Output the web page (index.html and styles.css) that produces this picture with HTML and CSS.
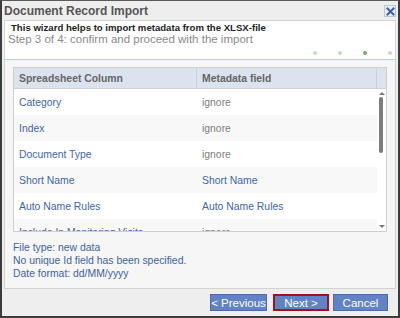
FILE: index.html
```html
<!DOCTYPE html>
<html lang="en">
<head>
    <meta charset="UTF-8">
    <title>Document Record Import</title>
    <link rel="stylesheet" href="styles.css">
</head>
<body>
    <div class="dialog">
        <!-- Title bar -->
        <div class="titlebar">
            <span class="title">Document Record Import</span>
            <button class="close" type="button" aria-label="Close">
                <svg width="9" height="9" viewBox="0 0 9 9">
                    <path d="M1.5 1.5 L7.5 7.5 M7.5 1.5 L1.5 7.5" stroke="#3b5ea6" stroke-width="2" stroke-linecap="square"/>
                </svg>
            </button>
        </div>

        <!-- Wizard header -->
        <div class="wizard-head">
            <div class="intro">This wizard helps to import metadata from the XLSX-file</div>
            <div class="step">Step 3 of 4: confirm and proceed with the import</div>
            <div class="dots">
                <span class="dot"></span>
                <span class="dot"></span>
                <span class="dot active"></span>
                <span class="dot"></span>
            </div>
        </div>

        <!-- Wizard body -->
        <div class="wizard-body">
            <div class="grid">
                <div class="grid-header">
                    <div class="col col-1">Spreadsheet Column</div>
                    <div class="col col-2">Metadata field</div>
                    <div class="col col-pad"></div>
                </div>
                <div class="grid-main">
                    <div class="rows">
                        <div class="row">
                            <div class="col col-1 link">Category</div>
                            <div class="col col-2 muted">ignore</div>
                        </div>
                        <div class="row alt">
                            <div class="col col-1 link">Index</div>
                            <div class="col col-2 muted">ignore</div>
                        </div>
                        <div class="row">
                            <div class="col col-1 link">Document Type</div>
                            <div class="col col-2 muted">ignore</div>
                        </div>
                        <div class="row alt">
                            <div class="col col-1 link">Short Name</div>
                            <div class="col col-2 link">Short Name</div>
                        </div>
                        <div class="row">
                            <div class="col col-1 link">Auto Name Rules</div>
                            <div class="col col-2 link">Auto Name Rules</div>
                        </div>
                        <div class="row alt">
                            <div class="col col-1 link">Include In Monitoring Visits</div>
                            <div class="col col-2 muted">ignore</div>
                        </div>
                    </div>
                    <div class="scrollbar">
                        <span class="arrow up"></span>
                        <div class="track"><span class="thumb"></span></div>
                        <span class="arrow down"></span>
                    </div>
                </div>
            </div>

            <div class="info">
                <div>File type: new data</div>
                <div>No unique Id field has been specified.</div>
                <div>Date format: dd/MM/yyyy</div>
            </div>
        </div>

        <!-- Buttons -->
        <div class="buttons">
            <button type="button" class="btn btn-prev">&lt; Previous</button>
            <button type="button" class="btn btn-focus">Next &gt;</button>
            <button type="button" class="btn btn-cancel">Cancel</button>
        </div>
    </div>
</body>
</html>
```

FILE: styles.css
```css
body {
    margin: 0;
    padding: 0;
    font-family: "Liberation Sans", Arial, sans-serif;
    background-color: #ffffff;
}

.dialog {
    width: 400px;
    height: 318px;
    box-sizing: border-box;
    border: 2px solid #3c3c3c;
    border-top: 1px solid #5a5a5a;
    background-color: #eeeeee;
    display: flex;
    flex-direction: column;
    overflow: hidden;
}

/* Title bar */
.titlebar {
    height: 19px;
    flex-shrink: 0;
    display: flex;
    align-items: center;
    justify-content: space-between;
    padding: 0 2px 0 2px;
}

.title {
    font-size: 12px;
    font-weight: bold;
    color: #555555;
}

.close {
    width: 12px;
    height: 12px;
    padding: 0;
    border: 1px solid #b9c6de;
    background-color: #e9eef7;
    display: flex;
    align-items: center;
    justify-content: center;
    margin-top: 1px;
}

/* Wizard header */
.wizard-head {
    margin: 0 2px;
    height: 40px;
    flex-shrink: 0;
    box-sizing: border-box;
    background-color: #ffffff;
    border: 1px solid #d6d6d6;
    border-bottom: 1px solid #bcd0ea;
    padding: 1px 0 0 3px;
}

.intro {
    font-size: 9.6px;
    line-height: 11px;
    font-weight: bold;
    color: #222222;
    padding-left: 3px;
}

.step {
    font-size: 11.5px;
    line-height: 13px;
    color: #8a8a8a;
}

.dots {
    display: flex;
    justify-content: flex-end;
    gap: 21px;
    padding-right: 3px;
    margin-top: 5px;
}

.dot {
    width: 4px;
    height: 4px;
    border-radius: 50%;
    background-color: #bfe0b8;
}

.dot.active {
    background-color: #6cb264;
}

/* Wizard body */
.wizard-body {
    margin: 0 2px;
    height: 229px;
    flex-shrink: 0;
    box-sizing: border-box;
    background-color: #f6f6f6;
    border: 1px solid #d2d2d2;
    border-top: none;
    padding: 7px 8px 0 8px;
    font-size: 10.4px;
}

.grid {
    border: 1px solid #cfcfcf;
    background-color: #ffffff;
}

.grid-header {
    display: flex;
    height: 20px;
    background-color: #dbe3ee;
    border-bottom: 1px solid #c9d0da;
    font-weight: bold;
    color: #666666;
}

.col {
    display: flex;
    align-items: center;
    padding-left: 5px;
    box-sizing: border-box;
    white-space: nowrap;
    overflow: hidden;
}

.col-1 {
    width: 183px;
}

.col-2 {
    width: 180px;
}

.grid-header .col-1,
.grid-header .col-2 {
    border-right: 1px solid #c9d0da;
}

.col-pad {
    flex: 1;
}

.grid-main {
    display: flex;
    height: 142px;
    overflow: hidden;
}

.rows {
    width: 363px;
}

.row {
    display: flex;
    height: 26px;
    background-color: #ffffff;
}

.row.alt {
    background-color: #f8f8f8;
}

.link {
    color: #3e65a8;
}

.muted {
    color: #7e7e7e;
}

/* Fake scrollbar */
.scrollbar {
    flex: 1;
    display: flex;
    flex-direction: column;
    align-items: center;
    padding: 3px 0 3px 0;
    background-color: #ffffff;
}

.arrow {
    width: 0;
    height: 0;
    border-left: 3px solid transparent;
    border-right: 3px solid transparent;
}

.arrow.up {
    border-bottom: 3px solid #7a7a7a;
}

.arrow.down {
    border-top: 3px solid #7a7a7a;
}

.track {
    flex: 1;
    width: 5px;
    padding-top: 2px;
}

.thumb {
    display: block;
    width: 4px;
    height: 56px;
    border-radius: 2px;
    background-color: #7d7d7d;
}

.info {
    padding-top: 10px;
    color: #3e63a2;
    line-height: 12.8px;
}

/* Buttons */
.buttons {
    flex: 1;
    display: flex;
    justify-content: flex-end;
    align-items: center;
    padding-right: 10px;
}

.btn {
    height: 17px;
    padding: 0;
    border: 1px solid #4c6cae;
    background-color: #6182c4;
    color: #ffffff;
    font-family: "Liberation Sans", Arial, sans-serif;
    font-size: 11.5px;
    white-space: nowrap;
    cursor: pointer;
}

.btn-prev {
    width: 57px;
}

.btn-focus {
    width: 56px;
    margin-left: 6px;
    border: 2px solid #a3121c;
}

.btn-cancel {
    width: 55px;
    margin-left: 4px;
}
```
